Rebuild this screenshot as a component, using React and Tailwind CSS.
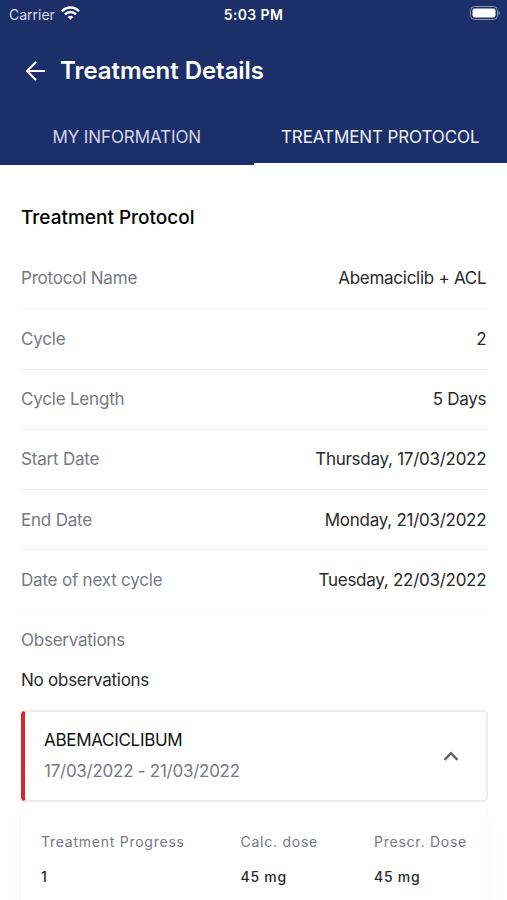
const rows = [
  ['Protocol Name', 'Abemaciclib + ACL'],
  ['Cycle', '2'],
  ['Cycle Length', '5 Days'],
  ['Start Date', 'Thursday, 17/03/2022'],
  ['End Date', 'Monday, 21/03/2022'],
  ['Date of next cycle', 'Tuesday, 22/03/2022'],
];

export default function App() {
  return (
    <div className="flex h-[900px] w-[507px] flex-col overflow-hidden bg-white font-['Inter',sans-serif] text-[#29292b]">
      <header className="flex h-[165px] shrink-0 flex-col bg-[#1c2f69] text-white">
        <div className="grid h-[28px] grid-cols-3 items-center pr-[7px] pl-[9px] text-[14px]">
          <div className="flex items-center gap-[6px] text-[#d9deea]">
            <span>Carrier</span>
            <svg className="-mt-[2px]" width="19" height="14" viewBox="0 0 19 14" fill="none" stroke="white" strokeWidth="2.4">
              <path d="M1 5.2C5.700.2 13.300.2 18 5.200" />
              <path d="M4 8.400c3.200-3.200 7.800-3.200 11 0" />
              <path d="M6.700 10.900c1.700-1.600 3.900-1.600 5.600 0L9.500 13.700z" fill="white" stroke="none" />
            </svg>
          </div>
          <span className="-ml-[2px] text-center font-semibold tracking-[0.35px] whitespace-nowrap">5:03 PM</span>
          <svg className="-mt-[2px] justify-self-end" width="30" height="14" viewBox="0 0 30 14">
            <rect x=".5" y=".5" width="27" height="13" rx="4" fill="none" stroke="#8d97b4" />
            <rect x="2.500" y="2.500" width="23" height="9" rx="2" fill="white" />
            <path d="M28.500 5c1.700.6 1.700 3.400 0 4z" fill="#8d97b4" />
          </svg>
        </div>
        <div className="flex h-[86px] items-center gap-[15px] pl-[25px]">
          <svg width="20" height="20" viewBox="0 0 20 20" fill="none" stroke="white" strokeWidth="2.100" strokeLinecap="round">
            <path d="M19 10H2M10.500 1.500L2 10l8.500 8.500" />
          </svg>
          <h1 className="text-[24px] font-semibold tracking-[-0.050px]">Treatment Details</h1>
        </div>
        <div className="grid h-[51px] grid-cols-2 text-[17px] tracking-[-0.1px]">
          <span className="flex justify-center pt-[11px] text-[#d0d7e8]">MY INFORMATION</span>
          <span className="flex justify-center border-b-2 border-white pt-[11px] text-[#edf1fc]">TREATMENT PROTOCOL</span>
        </div>
      </header>
      <main className="flex flex-col pr-[19px] pl-[21px] pt-[40px]">
        <h2 className="h-[44px] text-[19px] leading-[26px] font-medium text-black">Treatment Protocol</h2>
        {rows.map(([label, value]) => (
          <div key={label} className="flex h-[60.300px] items-center justify-between border-b border-[#f0f0f1] pt-px pr-[2px] text-[17px] last-of-type:border-[#f8f8f8]">
            <span className="tracking-[-0.2px] text-[#77797f]">{label}</span>
            <span className="-mr-[0.300px] tracking-[-0.270px]">{value}</span>
          </div>
        ))}
        <p className="mt-[17px] text-[17px] leading-[24px] tracking-[-0.250px] text-[#77797f]">Observations</p>
        <p className="mt-[16px] text-[17px] leading-[24px] tracking-[-0.250px]">No observations</p>
        <section className="mt-[18px] flex h-[92px] items-center justify-between rounded-[5px] border-2 border-l-4 border-[#ededee] border-l-[#df2529] pt-px pr-[27px] pl-[19px]">
          <div>
            <h3 className="text-[17px] leading-[31px] tracking-[-0.300px] text-[#111]">ABEMACICLIBUM</h3>
            <p className="text-[17px] leading-[31px] tracking-[-0.260px] text-[#77797f]">17/03/2022 - 21/03/2022</p>
          </div>
          <svg width="16" height="10" viewBox="0 0 16 10" fill="none" stroke="#606166" strokeWidth="2.400"><path d="M1.500 8.800L8 2.200l6.500 6.600" /></svg>
        </section>
        <section className="mr-px grid h-[130px] grid-cols-[199.500px_133.500px_1fr] grid-rows-[35px_35px] rounded-t-[5px] px-[20px] pt-[28px] text-[14px] leading-[24px] tracking-[0.750px] shadow-[0_14px_18px_rgba(0,0,0,0.04),0_0_2px_rgba(0,0,0,0.06)]">
          <span className="text-[#77797f]">Treatment Progress</span>
          <span className="text-[#77797f]">Calc. dose</span>
          <span className="whitespace-nowrap text-[#77797f]">Prescr. Dose</span>
          <span className="font-medium">1</span>
          <span className="font-medium">45 mg</span>
          <span className="font-medium">45 mg</span>
        </section>
      </main>
    </div>
  );
}
